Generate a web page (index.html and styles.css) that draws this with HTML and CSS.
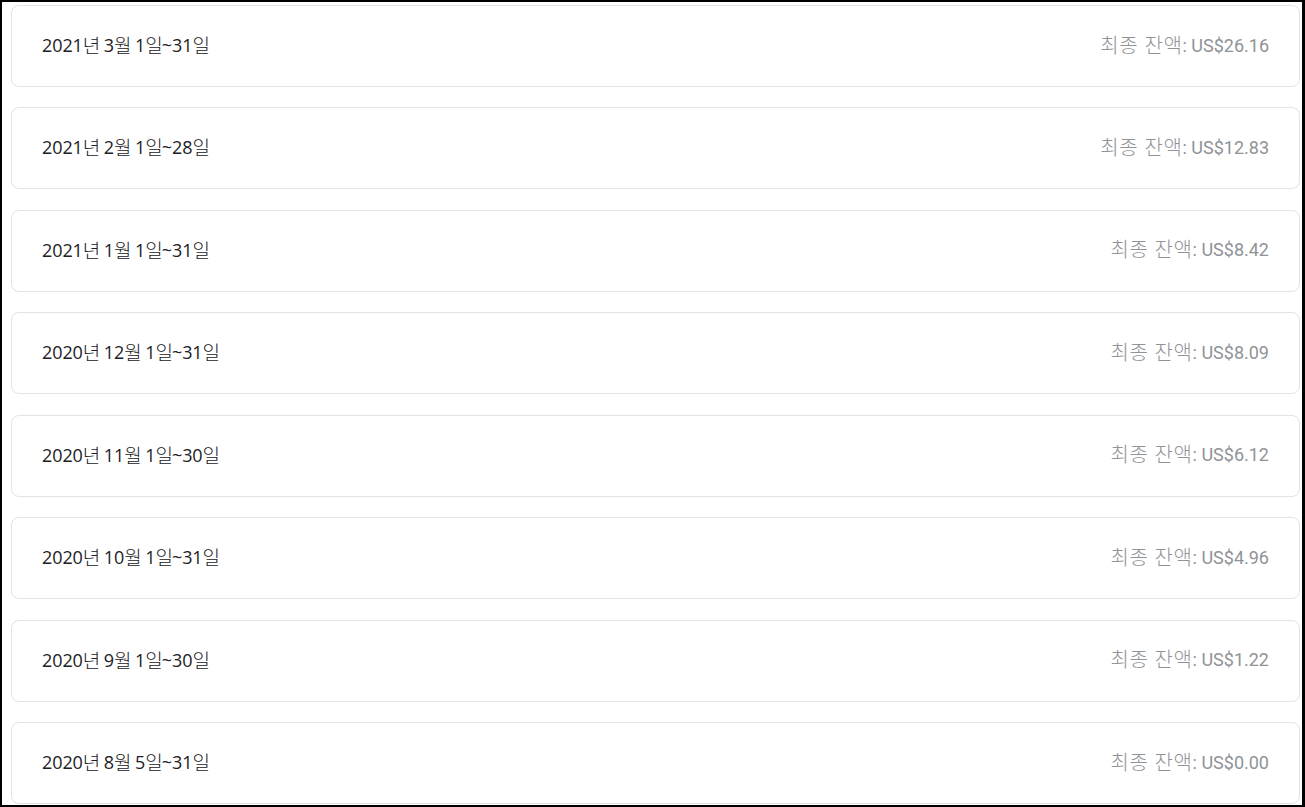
FILE: index.html
```html
<!DOCTYPE html>
<html lang="ko">
<head>
<meta charset="utf-8">
<link rel="stylesheet" href="styles.css">
</head>
<body>
<div class="frame">
  <ul class="list">
    <li class="card"><span class="period">2021<span class="ko">년</span> 3<span class="ko">월</span> 1<span class="ko">일</span>~31<span class="ko">일</span></span><span class="balance"><span class="ko">최종 잔액</span>: US$26.16</span></li>
    <li class="card"><span class="period">2021<span class="ko">년</span> 2<span class="ko">월</span> 1<span class="ko">일</span>~28<span class="ko">일</span></span><span class="balance"><span class="ko">최종 잔액</span>: US$12.83</span></li>
    <li class="card"><span class="period">2021<span class="ko">년</span> 1<span class="ko">월</span> 1<span class="ko">일</span>~31<span class="ko">일</span></span><span class="balance"><span class="ko">최종 잔액</span>: US$8.42</span></li>
    <li class="card"><span class="period">2020<span class="ko">년</span> 12<span class="ko">월</span> 1<span class="ko">일</span>~31<span class="ko">일</span></span><span class="balance"><span class="ko">최종 잔액</span>: US$8.09</span></li>
    <li class="card"><span class="period">2020<span class="ko">년</span> 11<span class="ko">월</span> 1<span class="ko">일</span>~30<span class="ko">일</span></span><span class="balance"><span class="ko">최종 잔액</span>: US$6.12</span></li>
    <li class="card"><span class="period">2020<span class="ko">년</span> 10<span class="ko">월</span> 1<span class="ko">일</span>~31<span class="ko">일</span></span><span class="balance"><span class="ko">최종 잔액</span>: US$4.96</span></li>
    <li class="card"><span class="period">2020<span class="ko">년</span> 9<span class="ko">월</span> 1<span class="ko">일</span>~30<span class="ko">일</span></span><span class="balance"><span class="ko">최종 잔액</span>: US$1.22</span></li>
    <li class="card"><span class="period">2020<span class="ko">년</span> 8<span class="ko">월</span> 5<span class="ko">일</span>~31<span class="ko">일</span></span><span class="balance"><span class="ko">최종 잔액</span>: US$0.00</span></li>
  </ul>
</div>
</body>
</html>
```
FILE: styles.css
```css
html, body {
  margin: 0;
  padding: 0;
  background: #fff;
}
.frame {
  box-sizing: border-box;
  width: 1305px;
  height: 807px;
  border-style: solid;
  border-color: #000;
  border-width: 2px 3px 2px 2px;
  overflow: hidden;
  background: #fff;
}
.list {
  list-style: none;
  margin: 0;
  padding: 3px 2px 0 9px;
  display: flex;
  flex-direction: column;
  gap: 20.45px;
}
.card {
  box-sizing: border-box;
  height: 82px;
  flex: none;
  border: 1px solid #e3e3e3;
  border-radius: 8px;
  display: flex;
  align-items: center;
  justify-content: space-between;
  padding: 0 30px 2px 30px;
}
.period {
  font-family: "Open Sans", "Noto Sans CJK KR", sans-serif;
  font-size: 18px;
  color: #202124;
  letter-spacing: -0.1px;
}
.balance {
  font-family: Roboto, "Noto Sans CJK KR", sans-serif;
  font-size: 18px;
  color: #8f9397;
}
.ko {
  font-family: "Noto Sans CJK KR", sans-serif;
  font-weight: 300;
  vertical-align: -1px;
  line-height: 1;
}
.period .ko {
  font-size: 19px;
  letter-spacing: -1px;
}
.balance .ko {
  font-size: 20px;
  letter-spacing: 0.6px;
}
```
